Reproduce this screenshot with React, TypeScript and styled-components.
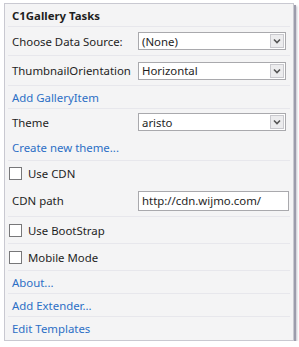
import React from 'react';
import styled, { createGlobalStyle } from 'styled-components';

const GlobalStyle = createGlobalStyle`
  html, body {
    margin: 0;
    padding: 0;
    background: #ffffff;
  }
  body {
    font-family: "Noto Sans", "Open Sans", sans-serif;
    font-size: 11.4px;
    color: #1e1e1e;
  }
`;

const Frame = styled.div`
  padding: 3px 0 0 4px;
`;

const Panel = styled.div`
  width: 288px;
  background: #f4f4f5;
  border: 1px solid #c9c9d1;
  box-shadow: 2px 2px 0 #9c9cab, 3px 3px 2px rgba(120, 120, 140, 0.45);
`;

const Section = styled.div<{ $last?: boolean }>`
  display: flex;
  flex-direction: column;
  margin: 0 3px;
  border-bottom: ${(p) => (p.$last ? 'none' : '1px solid #e7e7ec')};
`;

const Line = styled.div<{ $h: number }>`
  display: flex;
  align-items: center;
  height: ${(p) => p.$h}px;
  padding-left: 4px;
  padding-right: 1px;
`;

const Title = styled.span`
  font-weight: 700;
  color: #1e1e1e;
`;

const Label = styled.span`
  width: 126px;
  flex-shrink: 0;
  white-space: nowrap;
`;

const LinkText = styled.a`
  color: #2c6fc5;
  text-decoration: none;
  cursor: pointer;
`;

const Select = styled.div`
  display: flex;
  align-items: center;
  justify-content: space-between;
  box-sizing: border-box;
  width: 148px;
  height: 18px;
  background: #ffffff;
  border: 1px solid #a9a9ad;
  padding: 0 1px 0 3px;
`;

const Arrow = styled.span`
  display: flex;
  align-items: center;
  justify-content: center;
  box-sizing: border-box;
  width: 14px;
  height: 14px;
  background: #ececee;
  border: 1px solid #c9c9ce;
`;

const TextInput = styled.div`
  box-sizing: border-box;
  width: 151px;
  height: 20px;
  display: flex;
  align-items: center;
  padding-left: 3px;
  background: #ffffff;
  border: 1px solid #a9a9ad;
`;

const Box = styled.span`
  box-sizing: border-box;
  width: 13px;
  height: 13px;
  margin-left: -3px;
  margin-right: 6px;
  background: #ffffff;
  border: 1px solid #777779;
`;

const Chevron = () => (
  <svg width="8" height="6" viewBox="0 0 8 6">
    <path d="M1 1.5 L4 4.5 L7 1.5" fill="none" stroke="#555" strokeWidth="1.6" />
  </svg>
);

const Dropdown = ({ value }: { value: string }) => (
  <Select>
    <span>{value}</span>
    <Arrow>
      <Chevron />
    </Arrow>
  </Select>
);

const Check = ({ label }: { label: string }) => (
  <>
    <Box />
    <span>{label}</span>
  </>
);

export default function App() {
  return (
    <>
      <GlobalStyle />
      <Frame>
        <Panel>
          <Section>
            <Line $h={22}>
              <Title>C1Gallery Tasks</Title>
            </Line>
          </Section>
          <Section>
            <Line $h={28}>
              <Label>Choose Data Source:</Label>
              <Dropdown value="(None)" />
            </Line>
          </Section>
          <Section>
            <Line $h={29}>
              <Label>ThumbnailOrientation</Label>
              <Dropdown value="Horizontal" />
            </Line>
          </Section>
          <Section>
            <Line $h={22}>
              <LinkText>Add GalleryItem</LinkText>
            </Line>
          </Section>
          <Section>
            <Line $h={26}>
              <Label>Theme</Label>
              <Dropdown value="aristo" />
            </Line>
            <Line $h={25}>
              <LinkText>Create new theme...</LinkText>
            </Line>
          </Section>
          <Section>
            <Line $h={24}>
              <Check label="Use CDN" />
            </Line>
            <Line $h={31}>
              <Label>CDN path</Label>
              <TextInput>http://cdn.wijmo.com/</TextInput>
            </Line>
          </Section>
          <Section>
            <Line $h={26}>
              <Check label="Use BootStrap" />
            </Line>
          </Section>
          <Section>
            <Line $h={26}>
              <Check label="Mobile Mode" />
            </Line>
          </Section>
          <Section>
            <Line $h={22}>
              <LinkText>About...</LinkText>
            </Line>
          </Section>
          <Section>
            <Line $h={22}>
              <LinkText>Add Extender...</LinkText>
            </Line>
          </Section>
          <Section $last>
            <Line $h={23}>
              <LinkText>Edit Templates</LinkText>
            </Line>
          </Section>
        </Panel>
      </Frame>
    </>
  );
}
